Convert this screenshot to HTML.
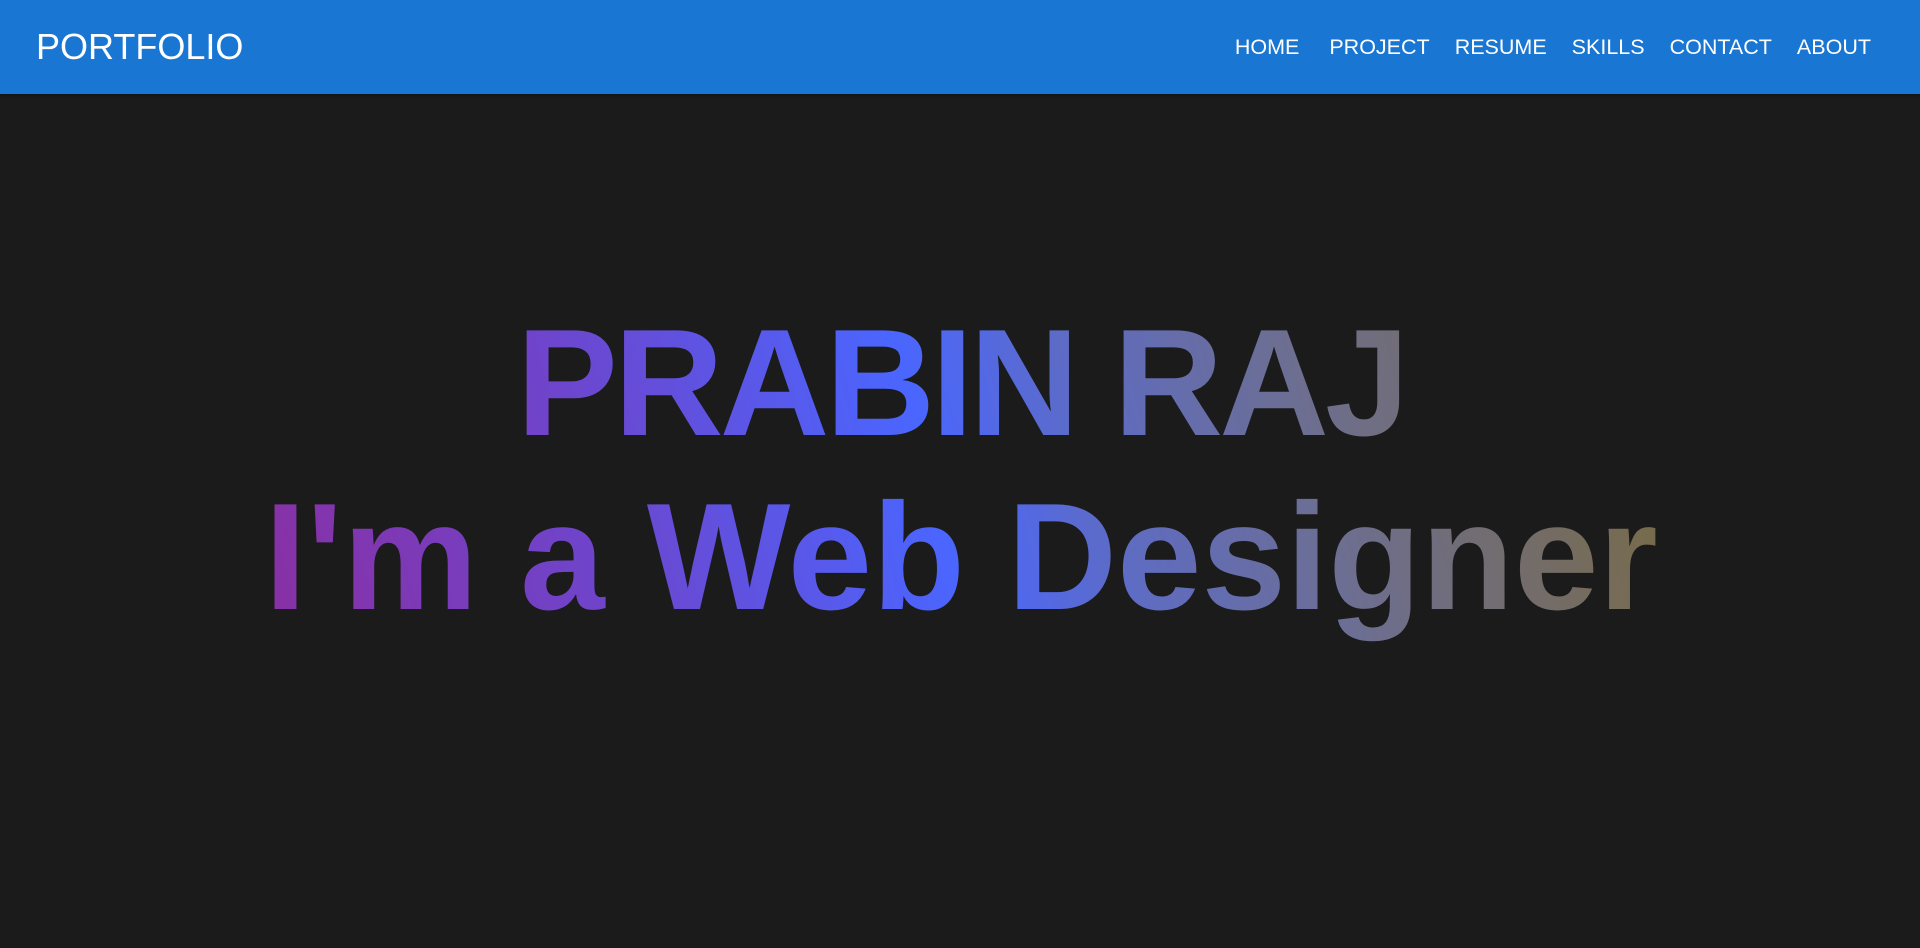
<!DOCTYPE html>
<html><head><meta charset="utf-8"><style>
html,body{margin:0;padding:0;width:1920px;height:948px;overflow:hidden;background:#1b1b1b;font-family:"Liberation Sans",Arial,sans-serif;}
header{position:absolute;left:0;top:0;width:1920px;height:94px;background:#1976d2;box-shadow:0 2px 4px rgba(0,0,0,.3);}
.logo{position:absolute;left:36px;top:0;line-height:94px;font-size:36px;color:#fff;}
nav{position:absolute;right:49px;top:0;height:94px;display:flex;align-items:center;gap:25px;}
nav a{color:#fff;font-size:21.5px;text-decoration:none;}
nav a:first-child{margin-right:5px;}
.hero{position:absolute;left:246px;top:291px;width:1430px;height:370px;
 background:linear-gradient(75deg,#8b2ea0 0%,#6e45cc 25%,#4a66ff 48%,#5f6cc0 60%,#6e6e8c 75%,#7a6a3a 100%);
 -webkit-background-clip:text;background-clip:text;color:transparent;-webkit-text-fill-color:transparent;font-weight:bold;font-size:152px;text-align:center;line-height:174px;padding-top:5px;box-sizing:border-box;}
.l1{letter-spacing:-4px;}
</style></head><body>
<header><div class="logo">PORTFOLIO</div>
<nav><a>HOME</a><a>PROJECT</a><a>RESUME</a><a>SKILLS</a><a>CONTACT</a><a>ABOUT</a></nav></header>
<div class="hero"><span class="l1">PRABIN RAJ</span><br>I'm a Web Designer</div>
</body></html>
